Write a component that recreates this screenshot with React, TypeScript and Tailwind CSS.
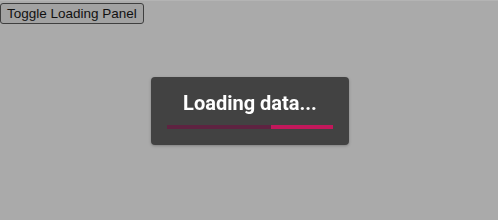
export default function App() {
  return (
    <div className="relative h-[220px] w-full bg-[#aaaaaa] font-['Liberation_Sans',Arial,sans-serif]">
      <div className="h-px w-full bg-[#b4b4b4]" />
      <button className="h-[21px] rounded-[3px] border border-[#3f3f3f] bg-[#a2a2a2] px-[6px] text-[13.5px] leading-none text-[#111]">
        Toggle Loading Panel
      </button>
      <div className="fixed inset-0 flex items-center justify-center pl-[2px] pt-[2px]">
        <div className="flex h-[68px] w-[198px] flex-col items-center rounded-[4px] bg-[#424242] pt-[14px] shadow-[0_1px_3px_rgba(0,0,0,0.25)]">
          <div className="font-['Roboto',sans-serif] text-[20px] font-bold leading-[24px] text-white">
            Loading data...
          </div>
          <div className="mt-[10px] flex h-[4px] w-[166px] bg-[#5e2341]">
            <div className="ml-auto h-full w-[62px] bg-[#c2185b]" />
          </div>
        </div>
      </div>
    </div>
  )
}
